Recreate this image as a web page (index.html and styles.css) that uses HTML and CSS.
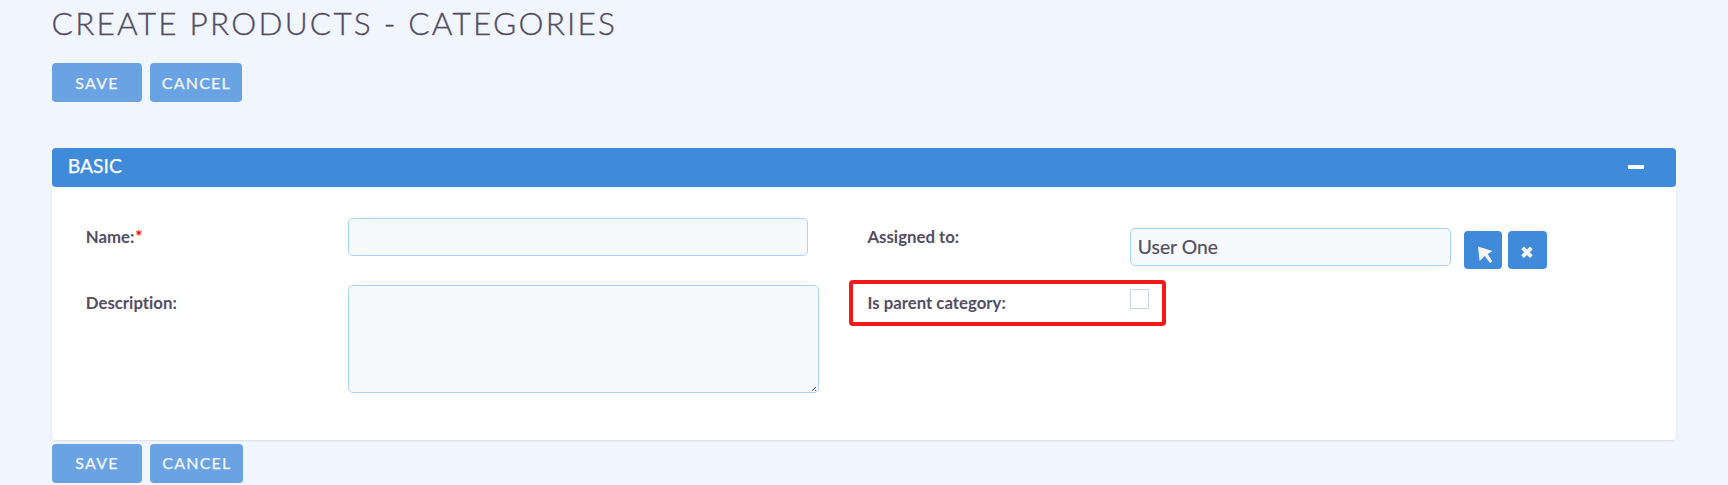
FILE: index.html
```html
<!DOCTYPE html>
<html lang="en">
<head>
<meta charset="utf-8">
<title>Create Products - Categories</title>
<link rel="stylesheet" href="styles.css">
</head>
<body>
<main class="page">
  <h1 class="title">CREATE PRODUCTS - CATEGORIES</h1>
  <div class="actions">
    <button class="btn btn-save">SAVE</button>
    <button class="btn btn-cancel">CANCEL</button>
  </div>
  <section class="panel">
    <header class="panel-header">
      <span class="panel-name">BASIC</span>
      <span class="collapse"></span>
    </header>
    <div class="panel-body">
      <div class="column column-left">
        <div class="row row-first">
          <label class="label">Name:<span class="required">*</span></label>
          <input class="field name-field" type="text">
        </div>
        <div class="row">
          <label class="label">Description:</label>
          <textarea class="field description-field"></textarea>
        </div>
      </div>
      <div class="column column-right">
        <div class="row row-first">
          <label class="label">Assigned to:</label>
          <input class="field user-field" type="text" value="User One">
          <div class="tools">
            <button class="tool" aria-label="Select"><svg width="38" height="38" viewBox="0 0 38 38"><path d="M14 15.5 28.5 20.1 23.7 23 28.2 30.3 26 32 20.9 25 15.6 30Z" fill="#f5f5f5"/></svg></button>
            <button class="tool" aria-label="Clear"><svg width="38" height="38" viewBox="0 0 38 38"><path d="M14.6 16.8 23.4 25.6M23.4 16.8 14.6 25.6" stroke="#f5f5f5" stroke-width="3.9"/></svg></button>
          </div>
        </div>
        <div class="row highlight">
          <label class="label">Is parent category:</label>
          <input class="check" type="checkbox">
        </div>
      </div>
    </div>
  </section>
  <div class="actions actions-bottom">
    <button class="btn btn-save">SAVE</button>
    <button class="btn btn-cancel">CANCEL</button>
  </div>
</main>
</body>
</html>
```

FILE: styles.css
```css
* { box-sizing: border-box; }
body {
  margin: 0;
  height: 485px;
  overflow: hidden;
  background: #f1f6fe;
  color: #534d64;
  font-family: Lato, sans-serif;
  font-variant-ligatures: none;
}
.page { padding: 0 51.6px; }
.title {
  margin: 0;
  padding-top: 4px;
  height: 63.4px;
  font-size: 31.6px;
  line-height: 39px;
  font-weight: 300;
  letter-spacing: 2.2px;
  -webkit-text-stroke: .35px #534d64;
}
.actions { display: flex; gap: 8px; height: 38.4px; }
.btn {
  padding: 0;
  border: 0;
  border-radius: 4px;
  background: #6aa3e4;
  color: #f5f5f5;
  font: 400 16px/38px Lato, sans-serif;
  letter-spacing: 1.2px;
  -webkit-text-stroke: .25px #f5f5f5;
}
.btn-save { width: 90.8px; }
.btn-cancel { width: 92px; }
.actions-bottom { margin-top: 4.4px; }
.actions-bottom .btn-cancel { width: 93px; }
.panel { margin-top: 46.4px; }
.panel-header {
  display: flex;
  justify-content: space-between;
  align-items: center;
  height: 38.6px;
  padding: 0 32.5px 2px 16.2px;
  background: #3f8bda;
  border-radius: 4px;
  color: #fff;
}
.panel-name { font-size: 19.3px; line-height: 34px; -webkit-text-stroke: .25px #fff; }
.collapse { width: 16px; height: 4px; margin-top: 1.5px; background: #fff; }
.panel-body {
  display: flex;
  height: 253px;
  padding-left: 34.2px;
  background: #fff;
  border-radius: 0 0 4px 4px;
  box-shadow: 0 1px 2px rgba(80, 90, 110, .16);
}
.column-left { width: 781.7px; padding-top: 31.2px; }
.column-right { padding-top: 31.2px; }
.row { display: flex; align-items: flex-start; }
.row-first { height: 66.8px; }
.label {
  width: 262.4px;
  padding-top: 8px;
  font-size: 16.8px;
  line-height: 20px;
  font-weight: 700;
}
.row-first .label { padding-top: 9px; }
.required { margin-left: 1px; color: #f00; }
.field {
  margin: 0;
  border: 1.3px solid #a9d2fc;
  border-radius: 5px;
  background: #f6fafd;
  color: #534d64;
  font: 400 19.3px/24px Lato, sans-serif;
  padding: 0 7px;
}
.name-field { width: 460px; height: 38.5px; }
.description-field { width: 470.5px; height: 107.8px; resize: both; }
.description-field::-webkit-resizer {
  background: linear-gradient(135deg, transparent 0 42%, #555 42% 58%, transparent 58% 76%, #555 76% 92%, transparent 92%) right 2px bottom 1px / 4px 4px no-repeat;
}
.user-field { width: 321px; height: 38.4px; margin-top: 9.8px; -webkit-text-stroke: .2px #534d64; }
.tools { display: flex; gap: 6px; margin: 12.8px 0 0 13px; }
.tool {
  width: 38.5px;
  height: 38.5px;
  padding: 0;
  border: 0;
  border-radius: 4px;
  background: #3f8bda;
}
.tool svg { display: block; }
.highlight {
  width: 317px;
  height: 46px;
  margin: -5px 0 0 -18.5px;
  padding-left: 14.5px;
  border: 4px solid #f31919;
  border-radius: 4px;
}
.highlight .label { padding-top: 9px; }
.check {
  appearance: none;
  width: 19px;
  height: 20px;
  margin: 5px 0 0;
  border: 1px solid #cbd7e0;
  background: #fff;
}
```
